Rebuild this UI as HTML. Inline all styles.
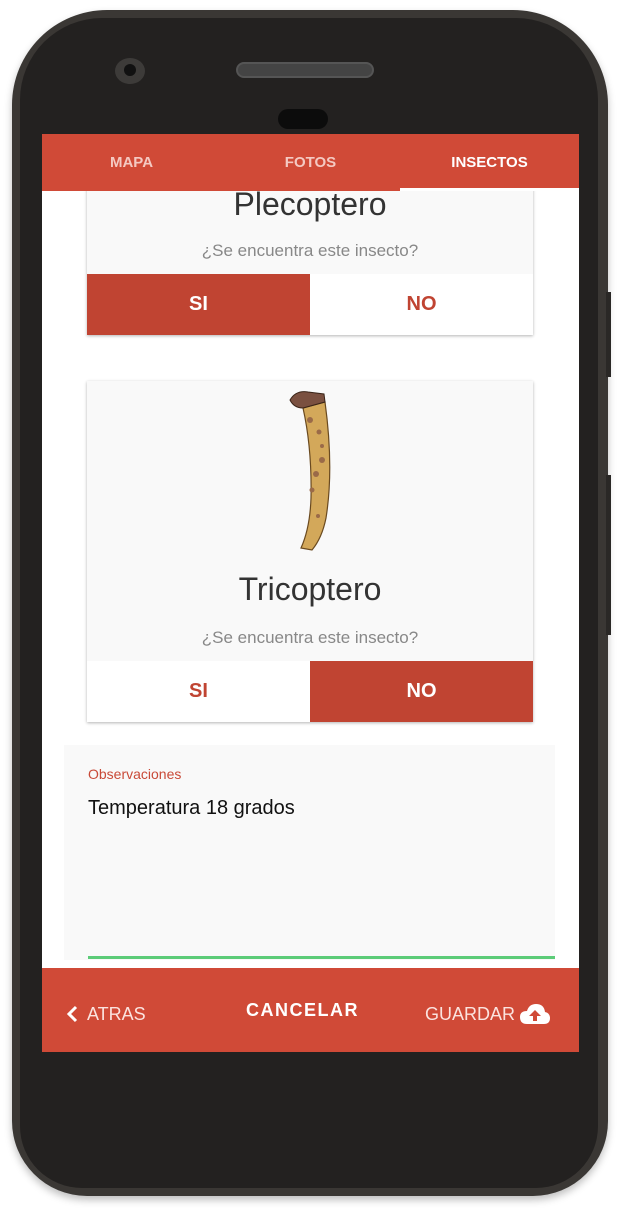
<!DOCTYPE html>
<html><head><meta charset="utf-8"><style>
*{margin:0;padding:0;box-sizing:border-box}
body{width:640px;height:1208px;background:#fff;position:relative;overflow:hidden;font-family:"Liberation Sans",sans-serif}
.a{position:absolute}
.phone{left:12px;top:10px;width:596px;height:1186px;border-radius:95px 95px 75px 75px;background:#3a3734;box-shadow:0 4px 8px rgba(0,0,0,.25)}
.inner{left:20px;top:18px;width:578px;height:1170px;border-radius:82px 82px 62px 62px;background:#232120}
.screen{left:42px;top:134px;width:537px;height:918px;background:#fff;overflow:hidden}
.tabs{left:0;top:0;width:537px;height:57px;background:#d04a37}
.tab{top:0;height:57px;line-height:57px;color:#f4c9c2;font-size:15px;font-weight:bold;text-align:center;width:179px}
.card{background:#f9f9f9;box-shadow:0 1px 3px rgba(0,0,0,.3)}
.btn{height:61px;line-height:61px;text-align:center;font-size:20px;font-weight:bold;width:223px}
.q{color:#888;font-size:17px;text-align:center;width:446px}
</style></head><body>
<div class="a phone"></div>
<div class="a inner"></div>
<div class="a" style="left:115px;top:58px;width:30px;height:26px;border-radius:50%;background:#3d3b39"></div>
<div class="a" style="left:124px;top:64px;width:12px;height:12px;border-radius:50%;background:#111"></div>
<div class="a" style="left:236px;top:62px;width:138px;height:16px;border-radius:8px;background:#444;border:2px solid #555"></div>
<div class="a" style="left:278px;top:109px;width:50px;height:20px;border-radius:10px;background:#0c0c0c"></div>
<div class="a" style="left:606px;top:292px;width:5px;height:85px;background:#2a2826"></div>
<div class="a" style="left:606px;top:475px;width:5px;height:160px;background:#2a2826"></div>

<div class="a screen">
  <div class="a card" style="left:45px;top:40px;width:446px;height:161px"></div>
  <div class="a" style="left:45px;top:52px;width:446px;text-align:center;font-size:32px;color:#333">Plecoptero</div>
  <div class="a q" style="left:45px;top:107px">¿Se encuentra este insecto?</div>
  <div class="a btn" style="left:45px;top:140px;background:#c04432;color:#fff">SI</div>
  <div class="a btn" style="left:268px;top:140px;background:#fff;color:#c04432">NO</div>

  <div class="a tabs">
    <div class="a tab" style="left:0">MAPA</div>
    <div class="a tab" style="left:179px">FOTOS</div>
    <div class="a tab" style="left:358px;color:#fff">INSECTOS</div>
    <div class="a" style="left:358px;top:54px;width:179px;height:3px;background:#fff"></div>
  </div>

  <div class="a card" style="left:45px;top:247px;width:446px;height:341px"></div>
  <svg class="a" style="left:240px;top:254px" width="60" height="170" viewBox="0 0 60 170">
    <path d="M21 20 L43 14 Q52 80 44 130 Q40 150 30 162 L19 160 Q28 140 29 110 Q30 60 21 20Z" fill="#d3a85a" stroke="#6a4a20" stroke-width="1.2"/>
    <path d="M8 12 Q14 2 26 4 L42 6 L43 14 L21 20 Q12 20 8 12Z" fill="#7a5040" stroke="#3a2418"/>
    <g fill="#9a6a48"><circle cx="28" cy="32" r="3"/><circle cx="37" cy="44" r="2.5"/><circle cx="40" cy="72" r="3"/><circle cx="34" cy="86" r="3"/><circle cx="30" cy="102" r="2.5"/><circle cx="40" cy="58" r="2"/><circle cx="36" cy="128" r="2"/></g>
  </svg>
  <div class="a" style="left:45px;top:437px;width:446px;text-align:center;font-size:32px;color:#333">Tricoptero</div>
  <div class="a q" style="left:45px;top:494px">¿Se encuentra este insecto?</div>
  <div class="a btn" style="left:45px;top:527px;background:#fff;color:#c04432">SI</div>
  <div class="a btn" style="left:268px;top:527px;background:#c04432;color:#fff">NO</div>

  <div class="a" style="left:22px;top:611px;width:491px;height:215px;background:#f9f9f9"></div>
  <div class="a" style="left:46px;top:632px;font-size:14px;color:#c94a38">Observaciones</div>
  <div class="a" style="left:46px;top:663px;font-size:20px;color:#111">Temperatura 18 grados</div>
  <div class="a" style="left:46px;top:822px;width:467px;height:3px;background:#5ccc78"></div>

  <div class="a" style="left:0;top:834px;width:537px;height:84px;background:#d04a37">
    <svg class="a" style="left:24px;top:37px" width="12" height="18" viewBox="0 0 12 18"><path d="M10 2 L3 9 L10 16" stroke="#fff" stroke-width="3" fill="none"/></svg>
    <div class="a" style="left:45px;top:36px;font-size:18px;color:#fbe3df">ATRAS</div>
    <div class="a" style="left:204px;top:32px;font-size:18px;color:#fff;font-weight:bold;letter-spacing:1.5px">CANCELAR</div>
    <div class="a" style="left:383px;top:36px;font-size:18px;color:#fbe3df">GUARDAR</div>
    <svg class="a" style="left:478px;top:35px" width="30" height="22" viewBox="0 0 30 22"><path d="M7 21 Q0 21 0 14 Q0 8 7 8 Q9 1 16 1 Q24 1 25 9 Q30 10 30 15 Q30 21 24 21Z" fill="#fff"/><path d="M15 7 L9 13 L13 13 L13 18 L17 18 L17 13 L21 13Z" fill="#d04a37"/></svg>
  </div>
</div>
</body></html>
